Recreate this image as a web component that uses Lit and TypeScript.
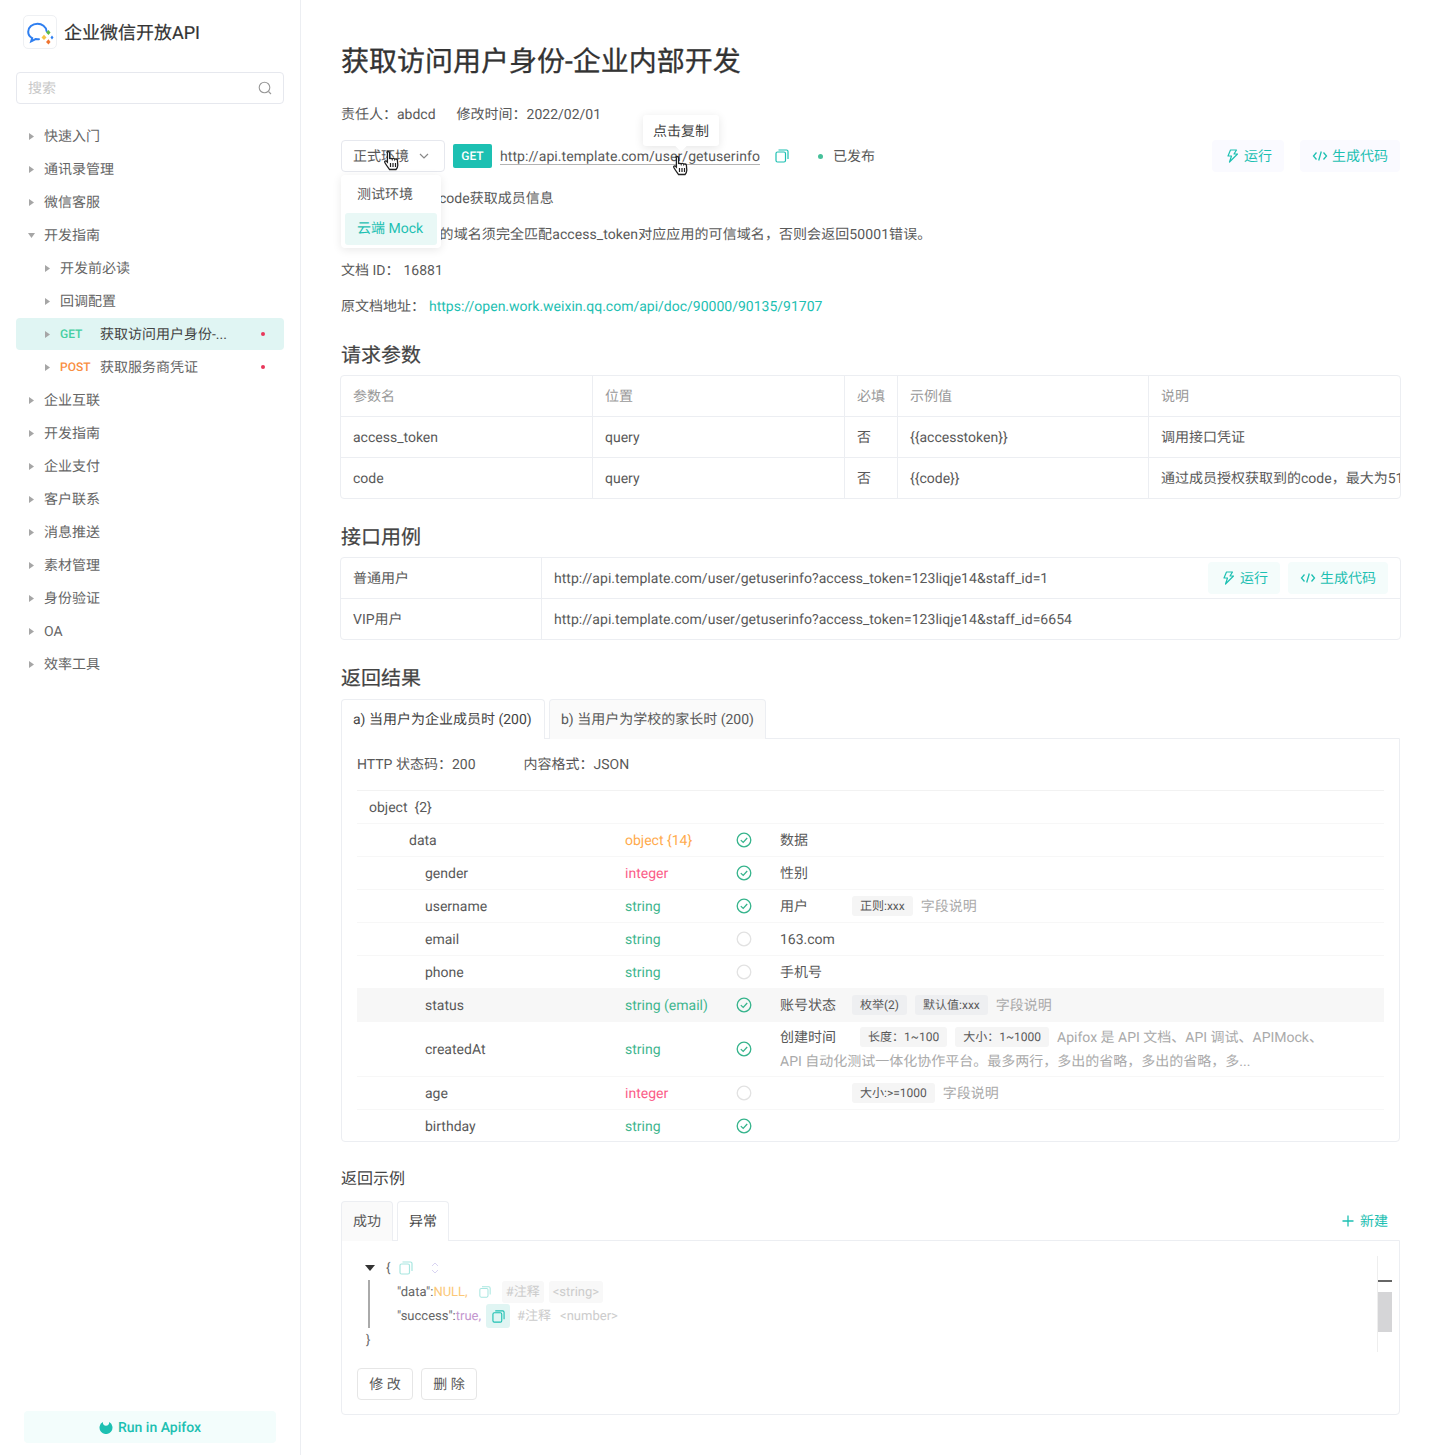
import { LitElement, html, css, svg } from "lit";
import { customElement } from "lit/decorators.js";

const copyIcon = (c: string, s = 14) => html`<svg width=${s} height=${s} viewBox="0 0 14 14" fill="none" stroke=${c} stroke-width="1.2"><rect x="1" y="3" width="9.5" height="10" rx="1.5"/><path d="M3.5 1h8a1.5 1.5 0 0 1 1.5 1.5V10"/></svg>`;
const boltIcon = html`<svg width="11" height="14" viewBox="1.500 0 11 14" fill="none" stroke="#1dc0b2" stroke-width="1.2" stroke-linejoin="round"><path d="M5 1h6L8.500 5H12L4 13l2-6H2.500z"/></svg>`;
const codeIcon = html`<svg width="16" height="12" viewBox="0 0 16 12" fill="none" stroke="#1dc0b2" stroke-width="1.3"><path d="M4.500 2.500 1.500 6l3 3.500M11.500 2.500l3 3.500-3 3.500M9.300 1.500 6.700 10.500"/></svg>`;
const hand = html`<svg width="18" height="22" viewBox="0 0 18 22"><path d="M5 1.500c1 0 1.600.7 1.600 1.600V9c.2-.9 2.300-1 2.600.1.3-.9 2.300-.9 2.600.3.400-.7 2.400-.6 2.600.8l.4 5c0 2-1 3.300-1.800 4.300H6.500C5.500 18 3.500 15.500 1.800 12.500c-.6-1.100.8-2.200 1.800-1.200l.8.800V3.100C3.400 2.200 4 1.500 5 1.500z" fill="#fff" stroke="#222" stroke-width="1.300"/><path d="M7.500 13v4M10 13v4M12.500 13v4" stroke="#222" stroke-width="1.200"/></svg>`;
const check = html`<svg width="16" height="16" viewBox="0 0 16 16" fill="none" stroke="#36b48c" stroke-width="1.300"><circle cx="8" cy="8" r="6.800"/><path d="M4.800 8.100 7.200 10.400 11.200 6"/></svg>`;
const uncheck = html`<svg width="16" height="16" viewBox="0 0 16 16" fill="none" stroke="#e2e2e2" stroke-width="1.300"><circle cx="8" cy="8" r="6.800"/></svg>`;
const tri = svg`<path d="M0 0 5 3.500 0 7z" fill="#a6a6a6"/>`;

interface NavItem { t: string; d?: number; open?: boolean; m?: string; active?: boolean; dot?: boolean; }
const nav: NavItem[] = [
  { t: "快速入门" }, { t: "通讯录管理" }, { t: "微信客服" }, { t: "开发指南", open: true },
  { t: "开发前必读", d: 1 }, { t: "回调配置", d: 1 },
  { t: "获取访问用户身份-...", d: 1, m: "GET", active: true, dot: true },
  { t: "获取服务商凭证", d: 1, m: "POST", dot: true },
  { t: "企业互联" }, { t: "开发指南" }, { t: "企业支付" }, { t: "客户联系" }, { t: "消息推送" },
  { t: "素材管理" }, { t: "身份验证" }, { t: "OA" }, { t: "效率工具" },
];

interface Row { n: string; x: number; ty: string; c: string; req: boolean; name?: string; tags?: string[]; note?: string; hl?: boolean; }
const rows: Row[] = [
  { n: "data", x: 52, ty: "object {14}", c: "orange", req: true, name: "数据" },
  { n: "gender", x: 68, ty: "integer", c: "pink", req: true, name: "性别" },
  { n: "username", x: 68, ty: "string", c: "green", req: true, name: "用户", tags: ["正则:xxx"], note: "字段说明" },
  { n: "email", x: 68, ty: "string", c: "green", req: false, name: "163.com" },
  { n: "phone", x: 68, ty: "string", c: "green", req: false, name: "手机号" },
  { n: "status", x: 68, ty: "string (email)", c: "green", req: true, name: "账号状态", tags: ["枚举(2)", "默认值:xxx"], note: "字段说明", hl: true },
];

@customElement("app-root")
export class AppRoot extends LitElement {
  static styles = css`
    :host { display: block; width: 1440px; height: 1455px; overflow: hidden; background: #fff; color: #595959; font: 14px/20px Roboto, "Noto Sans CJK SC", sans-serif; text-rendering: geometricPrecision; }
    * { box-sizing: border-box; }
    .x { padding-top: 2px; }
    .app { display: flex; height: 1455px; }
    aside { width: 301px; flex: none; border-right: 1px solid #eceef2; padding: 15px 16px 12px; display: flex; flex-direction: column; }
    .brand { display: flex; align-items: center; gap: 7px; padding-left: 7px; height: 34px; font-size: 18px; font-weight: 400; color: #333; -webkit-text-stroke: .2px #333; }
    .brand .txt { padding-top: 4px; }
    .logo { width: 34px; height: 34px; border: 1px solid #eef0f3; border-radius: 5px; display: flex; align-items: center; justify-content: center; }
    .search { margin-top: 23px; height: 32px; border: 1px solid #e6e8ee; border-radius: 4px; display: flex; align-items: center; justify-content: space-between; padding: 0 11px; color: #c8c8c8; }
    .nav { margin-top: 15px; }
    .item { height: 32px; margin-top: 1px; display: flex; align-items: center; padding-left: 13px; color: #666; border-radius: 4px; }
    .item.d1 { padding-left: 29px; }
    .item svg { margin-right: 10px; flex: none; }
    .item.active { background: #e0f5f3; color: #444; }
    .m { width: 40px; font-size: 12px; font-weight: 500; }
    .m.GET { color: #46cfa2; } .m.POST { color: #f98e42; }
    .item .t { flex: 1; padding-top: 2px; }
    .dot { width: 4px; height: 4px; border-radius: 50%; background: #e8375a; margin-right: 19px; }
    .run { margin-top: auto; margin-left: 8px; margin-right: 8px; height: 32px; background: #f3fdfc; border-radius: 4px; display: flex; align-items: center; justify-content: center; gap: 5px; color: #1dc0b2; font-weight: 500; }
    main { flex: 1; min-width: 0; padding: 41px 40px 0; position: relative; }
    h1 { margin: 0 0 13px 0; font-size: 28px; line-height: 42px; font-weight: 400; color: #333; -webkit-text-stroke: .3px #333; }
    .meta { height: 36px; line-height: 38px; display: flex; gap: 21px; }
    .bar { margin-top: 8px; height: 32px; display: flex; align-items: center; margin-bottom: 8px; }
    .select { width: 104px; height: 32px; border: 1px solid #e6e8ee; border-radius: 4px; display: flex; align-items: center; gap: 10px; padding-left: 11px; }
    .get { margin-left: 8px; width: 39px; height: 24px; background: #1dc0b2; color: #fff; border-radius: 2px; font-size: 12px; font-weight: 500; text-align: center; line-height: 24px; }
    .url { margin-left: 8px; border-bottom: 1.500px solid #b4b4b4; line-height: 18px; letter-spacing: .08px; height: 19px; padding-top: 2px; margin-top: -1px; }
    .copy { margin-left: 15px; display: flex; }
    .pub { margin-left: 29px; display: flex; align-items: center; gap: 10px; }
    .pub i { width: 5px; height: 5px; border-radius: 50%; background: #46c09a; }
    .spacer { flex: 1; }
    .btn { height: 32px; padding: 0 12px 0 15px; background: #fafaff; color: #1dc0b2; border-radius: 4px; display: flex; align-items: center; gap: 6px; }
    .btn.code { gap: 4px; margin-left: 16px; padding-left: 12px; }
    .line { height: 36px; line-height: 38px; }
    .line.wide { letter-spacing: .08px; }
    .line a { color: #1dc0b2; margin-left: 4px; }
    .line .id { margin-left: 4px; }
    h2 { margin: 17px 0 6px; font-size: 20px; line-height: 28px; font-weight: 400; color: #444; -webkit-text-stroke: .2px #444; }
    h2.next { margin-top: 24px; }
    h3 { margin: 25px 0 10px; font-size: 16px; line-height: 24px; font-weight: 400; color: #444; }
    .tbl { margin: 0 -1px; border: 1px solid #eceef2; border-radius: 4px; overflow: hidden; }
    .tr { display: grid; height: 41px; align-items: center; border-top: 1px solid #eceef2; }
    .tr:first-child { height: 40px; border-top: 0; }
    .tr.p { grid-template-columns: 251px 252px 53px 251px 1fr; }
    .td { height: 100%; padding: 2px 12px 0; display: flex; align-items: center; white-space: nowrap; border-left: 1px solid #eceef2; overflow: hidden; }
    .td:first-child { border-left: 0; }
    .th { color: #999; }
    .tr.e { grid-template-columns: 200px 1fr; }
    .tr.e .td + .td { letter-spacing: .03px; }
    .td .btn { background: #f4fcfb; letter-spacing: 0; margin-top: -2px; }
    .td .run1 { margin-left: auto; }
    .td .btn.code { margin-left: 8px; }
    .tabs { display: flex; gap: 4px; position: relative; z-index: 1; }
    .tab { height: 40px; padding: 0 11px; border: 1px solid #eceef2; border-bottom: 0; border-radius: 4px 4px 0 0; line-height: 41px; background: #fafafa; }
    .tab.on { background: #fff; color: #444; }
    .tab.w { width: 204px; }
    .panel { border: 1px solid #eceef2; border-radius: 0 0 4px 4px; margin-top: -1px; padding: 0 15px; }
    .result { height: 404px; }
    .sum { height: 52px; padding-bottom: 2px; display: flex; align-items: center; gap: 48px; border-bottom: 1px solid #f2f2f2; }
    .sum span { padding-top: 2px; }
    .row { display: grid; grid-template-columns: 268px 111px 16px 1fr; height: 33px; align-items: center; border-bottom: 1px solid #f7f7f7; }
    .row > div { padding-top: 2px; }
    .row > .desc { padding-top: 0; }
    .row.hl { background: #f7f7f7; }
    .row.tall { height: 55px; }
    .row.last { border-bottom: 0; height: 32px; }
    .orange { color: #ffab4d; } .pink { color: #fb5c88; } .green { color: #3fb68f; }
    .desc { padding-left: 28px; display: flex; align-items: center; white-space: nowrap; }
    .desc .nm { width: 72px; padding-top: 2px; }
    .desc .nm.w { width: 80px; }
    .desc .note { padding-top: 2px; }
    .tag { height: 20px; padding: 0 8px; background: #f5f5f5; border-radius: 3px; font-size: 12px; line-height: 20px; margin-right: 8px; }
    .row.hl .tag { background: #eeeff1; }
    .note { color: #aaa; }
    .two .desc { padding-left: 0; height: 24px; }
    .sec { height: 24px; line-height: 26px; color: #aaa; }
    .head2 { display: flex; justify-content: space-between; align-items: center; }
    .add { color: #1dc0b2; display: flex; align-items: center; gap: 6px; padding-right: 12px; }
    .ex { height: 175px; padding: 15px 7px 0 15px; }
    .jw { display: flex; height: 96px; }
    .json { flex: 1; font-size: 13px; line-height: 24px; color: #666; }
    .jl { height: 24px; padding-top: 2px; display: flex; align-items: center; white-space: nowrap; }
    .jl > svg, .jl > .ic, .jl > .caret, .jl > .cbox, .jl > .jt { margin-top: -2px; }
    .ic { display: flex; }
    .jb { margin-left: 11px; border-left: 2px solid #aaa; padding-left: 27px; height: 48px; }
    .caret { width: 0; height: 0; border: 5px solid transparent; border-top: 6px solid #333; border-bottom: 0; margin: 0 11px 0 8px; }
    .null { color: #fbc777; } .tru { color: #c497cf; }
    .jt { height: 22px; line-height: 24px; background: #f8f8f8; border-radius: 3px; padding: 0 4px; color: #ccc; margin-left: 5px; }
    .jt.plain { background: none; color: #ccc; margin-left: 1px; }
    .cbox { width: 24px; height: 24px; background: #e0f5f3; border-radius: 3px; display: flex; align-items: center; justify-content: center; margin-left: 5px; }
    .sb { width: 15px; height: 96px; border-left: 1px solid #eee; position: relative; }
    .sb i { position: absolute; left: 0; width: 14px; }
    .sb .a { top: 24px; height: 2px; background: #666; }
    .sb .b { top: 36px; height: 40px; background: #d5d5d7; }
    .acts { display: flex; gap: 8px; margin-top: 16px; }
    .act { width: 56px; height: 32px; border: 1px solid #e6e6e6; border-radius: 4px; text-align: center; line-height: 32px; }
    .over { position: absolute; }
    .drop { left: 40px; top: 175px; width: 100px; height: 73px; background: #fff; border-radius: 4px; box-shadow: 0 2px 10px rgba(0,0,0,.09); padding: 3px 4px; }
    .drop div { height: 32px; line-height: 34px; padding-left: 12px; border-radius: 3px; margin-bottom: 3px; }
    .drop .on { background: #e9f8f6; color: #1dc0b2; line-height: 33px; }
    .tip { left: 342px; top: 115px; width: 76px; height: 31px; background: #fff; border-radius: 3px; box-shadow: 0 2px 10px rgba(0,0,0,.1); color: #444; text-align: center; line-height: 35px; }
    .tip::after { content: ""; position: absolute; left: 34px; bottom: -4px; width: 8px; height: 8px; background: #fff; transform: rotate(45deg); }
    .cur { display: flex; }
  `;

  private renderRow(r: Row) {
    return html`<div class="row ${r.hl ? "hl" : ""}">
      <div style="padding-left:${r.x}px">${r.n}</div>
      <div class=${r.c}>${r.ty}</div>
      ${r.req ? check : uncheck}
      <div class="desc"><span class="nm">${r.name}</span>${(r.tags || []).map((t) => html`<span class="tag">${t}</span>`)}<span class="note">${r.note}</span></div>
    </div>`;
  }

  render() {
    return html`<div class="app">
      <aside>
        <div class="brand">
          <span class="logo"><svg width="30" height="30" viewBox="0 0 30 30" fill="none"><path d="M21.500 14C21 9.500 17 6.800 12.500 6.800 7.300 6.800 3.200 10.300 3.200 14.700c0 2.800 1.600 5 4 6.400l-1 3.200 4.400-2.200c1.200.2 2.300.2 3.400.1" stroke="#2f7ff0" stroke-width="2" stroke-linecap="round"/><path d="M21 15.500l2.500-2.500 2 2.500-2 2.500z" fill="#5fb946"/><path d="M16.500 20.500l2.500-2.800 2.500 2.800-2.500 2.500z" fill="#f6c344"/><path d="M21 25l2.500-2.800 2 2.800-2 2.500z" fill="#f0742f"/><path d="M25.500 20.500l1.500-2 1.500 2-1.500 2z" fill="#2f7ff0"/></svg></span>
          <span class="txt">企业微信开放API</span>
        </div>
        <div class="search"><span class="x">搜索</span><svg width="14" height="14" viewBox="0 0 14 14" fill="none" stroke="#999" stroke-width="1.100"><circle cx="6.500" cy="6.500" r="5.300"/><path d="M10.500 10.500 13 13"/></svg></div>
        <div class="nav">
          ${nav.map((n) => html`<div class="item ${n.d ? "d1" : ""} ${n.active ? "active" : ""}">
            <svg width="5" height="7" viewBox="0 0 5 7" style=${n.open ? "transform:rotate(90deg)" : ""}>${tri}</svg>
            ${n.m ? html`<span class="m ${n.m}">${n.m}</span>` : ""}
            <span class="t">${n.t}</span>
            ${n.dot ? html`<span class="dot"></span>` : ""}
          </div>`)}
        </div>
        <div class="run"><svg width="14" height="13" viewBox="0 0 14 13" fill="#1dc0b2"><path d="M3.800 .9A6.500 6.500 0 1 0 10.200 .9C10.200 3.400 9 4.700 7 4.700 5 4.700 3.800 3.400 3.800 .9z"/></svg><span class="x">Run in Apifox</span></div>
      </aside>
      <main>
        <h1>获取访问用户身份-企业内部开发</h1>
        <div class="meta"><span>责任人：abdcd</span><span>修改时间：2022/02/01</span></div>
        <div class="bar">
          <div class="select"><span class="x">正式环境</span><svg width="10" height="6" viewBox="0 0 10 6" fill="none" stroke="#888" stroke-width="1.200"><path d="M1 1l4 4 4-4"/></svg></div>
          <span class="get">GET</span>
          <span class="url">http://api.template.com/user/getuserinfo</span>
          <span class="copy">${copyIcon("#1dc0b2")}</span>
          <span class="pub"><i></i><span class="x">已发布</span></span>
          <span class="spacer"></span>
          <span class="btn">${boltIcon}<span class="x">运行</span></span>
          <span class="btn code">${codeIcon}<span class="x">生成代码</span></span>
        </div>
        <div class="line">接口说明：根据code获取成员信息</div>
        <div class="line wide">注意：页面跳转的域名须完全匹配access_token对应应用的可信域名，否则会返回50001错误。</div>
        <div class="line">文档 ID：<span class="id">16881</span></div>
        <div class="line">原文档地址：<a>https://open.work.weixin.qq.com/api/doc/90000/90135/91707</a></div>

        <h2>请求参数</h2>
        <div class="tbl">
          <div class="tr p"><div class="td th">参数名</div><div class="td th">位置</div><div class="td th">必填</div><div class="td th">示例值</div><div class="td th">说明</div></div>
          <div class="tr p"><div class="td">access_token</div><div class="td">query</div><div class="td">否</div><div class="td">{{accesstoken}}</div><div class="td">调用接口凭证</div></div>
          <div class="tr p"><div class="td">code</div><div class="td">query</div><div class="td">否</div><div class="td">{{code}}</div><div class="td">通过成员授权获取到的code，最大为512字节</div></div>
        </div>

        <h2 class="next">接口用例</h2>
        <div class="tbl">
          <div class="tr e"><div class="td">普通用户</div><div class="td">http://api.template.com/user/getuserinfo?access_token=123liqje14&staff_id=1<span class="btn run1">${boltIcon}<span class="x">运行</span></span><span class="btn code">${codeIcon}<span class="x">生成代码</span></span></div></div>
          <div class="tr e"><div class="td">VIP用户</div><div class="td">http://api.template.com/user/getuserinfo?access_token=123liqje14&staff_id=6654</div></div>
        </div>

        <h2 class="next">返回结果</h2>
        <div class="tabs" style="margin-top:7px"><div class="tab on w">a) 当用户为企业成员时 (200)</div><div class="tab">b) 当用户为学校的家长时 (200)</div></div>
        <div class="panel result">
          <div class="sum"><span>HTTP 状态码：200</span><span>内容格式：JSON</span></div>
          <div class="row"><div style="padding-left:12px">object&nbsp;&nbsp;{2}</div></div>
          ${rows.map((r) => this.renderRow(r))}
          <div class="row tall">
            <div style="padding-left:68px">createdAt</div><div class="green">string</div>${check}
            <div class="desc two"><div>
              <div class="desc"><span class="nm w">创建时间</span><span class="tag">长度：1~100</span><span class="tag">大小：1~1000</span><span class="note">Apifox 是 API 文档、API 调试、APIMock、</span></div>
              <div class="sec">API 自动化测试一体化协作平台。最多两行，多出的省略，多出的省略，多...</div>
            </div></div>
          </div>
          <div class="row">
            <div style="padding-left:68px">age</div><div class="pink">integer</div>${uncheck}
            <div class="desc"><span class="nm"></span><span class="tag">大小:>=1000</span><span class="note">字段说明</span></div>
          </div>
          <div class="row last">
            <div style="padding-left:68px">birthday</div><div class="green">string</div>${check}
          </div>
        </div>

        <h3>返回示例</h3>
        <div class="head2">
          <div class="tabs"><div class="tab">成功</div><div class="tab on">异常</div></div>
          <span class="add"><svg width="12" height="12" viewBox="0 0 12 12" stroke="#1dc0b2" stroke-width="1.300"><path d="M6 .5v11M.5 6h11"/></svg><span class="x">新建</span></span>
        </div>
        <div class="panel ex">
          <div class="jw">
            <div class="json">
              <div class="jl"><span class="caret"></span>{<span class="ic" style="margin-left:9px">${copyIcon("#a8e6e0")}</span><svg style="margin-left:18px" width="8" height="14" viewBox="0 0 8 14" fill="none" stroke="#d9d4f2"><path d="M1 5l3-3 3 3M1 9l3 3 3-3"/></svg></div>
              <div class="jb">
                <div class="jl">"data":<span class="null">NULL,</span><span class="ic" style="margin-left:11px">${copyIcon("#a8e6e0",12)}</span><span class="jt" style="margin-left:11px">#注释</span><span class="jt">&lt;string&gt;</span></div>
                <div class="jl">"success":<span class="tru">true,</span><span class="cbox">${copyIcon("#1dc0b2",13)}</span><span class="jt plain" style="margin-left:3px">#注释</span><span class="jt plain">&lt;number&gt;</span></div>
              </div>
              <div class="jl" style="margin-left:9px">}</div>
            </div>
            <div class="sb"><i class="a"></i><i class="b"></i></div>
          </div>
          <div class="acts"><div class="act">修 改</div><div class="act">删 除</div></div>
        </div>

        <div class="over drop"><div>测试环境</div><div class="on">云端 Mock</div></div>
        <div class="over tip">点击复制</div>
        <div class="over cur" style="left:82px;top:150px">${hand}</div>
        <div class="over cur" style="left:371px;top:155px">${hand}</div>
      </main>
    </div>`;
  }
}
